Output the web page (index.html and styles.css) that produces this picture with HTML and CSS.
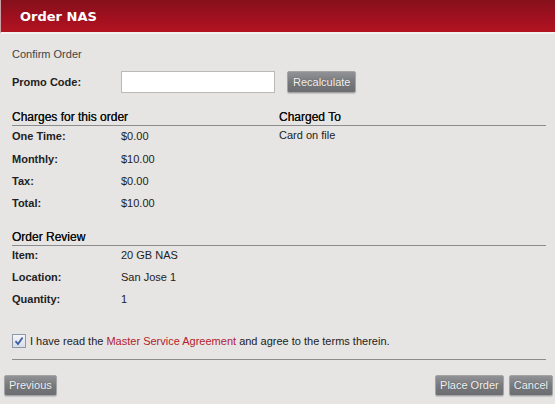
FILE: index.html
```html
<!doctype html>
<html lang="en">
  <head>
    <meta charset="UTF-8" />
    <meta name="viewport" content="width=device-width, initial-scale=1.0" />
    <title>Order NAS</title>
    <link rel="stylesheet" href="styles.css">
  </head>

  <body>
    <div class="dialog">
      <header class="dialog-title">Order NAS</header>

      <main class="dialog-body">
        <p class="subtitle">Confirm Order</p>

        <div class="promo">
          <label for="promo" class="label">Promo Code:</label>
          <input type="text" id="promo" />
          <button type="button" class="btn">Recalculate</button>
        </div>

        <div class="cols">
          <section>
            <h4 class="section-head">Charges for this order</h4>
            <div class="row"><span class="label">One Time:</span><span>$0.00</span></div>
            <div class="row"><span class="label">Monthly:</span><span>$10.00</span></div>
            <div class="row"><span class="label">Tax:</span><span>$0.00</span></div>
            <div class="row"><span class="label">Total:</span><span>$10.00</span></div>
          </section>
          <section>
            <h4 class="section-head">Charged To</h4>
            <div class="note">Card on file</div>
          </section>
        </div>

        <section class="review">
          <h4 class="section-head">Order Review</h4>
          <div class="row"><span class="label">Item:</span><span>20 GB NAS</span></div>
          <div class="row"><span class="label">Location:</span><span>San Jose 1</span></div>
          <div class="row"><span class="label">Quantity:</span><span>1</span></div>
        </section>

        <div class="agree">
          <span class="check">
            <svg width="10" height="10" viewBox="0 0 10 10">
              <path d="M1.5 5.2 L4 8 L8.6 1.4" fill="none" stroke="#3d5fa6" stroke-width="1.8" />
            </svg>
          </span>
          <span>I have read the <a href="#">Master Service Agreement</a> and agree to the terms therein.</span>
        </div>

        <hr class="divider" />
      </main>

      <footer class="dialog-foot">
        <button type="button" class="btn">Previous</button>
        <div class="foot-right">
          <button type="button" class="btn">Place Order</button>
          <button type="button" class="btn">Cancel</button>
        </div>
      </footer>
    </div>
  </body>
</html>
```

FILE: styles.css
```css
html,
body {
  margin: 0;
  height: 100%;
}

body {
  background: #e6e5e3;
  font-family: "Liberation Sans", Arial, sans-serif;
  font-size: 11px;
  color: #222;
}

.dialog-title {
  height: 32px;
  line-height: 33px;
  padding-left: 19px;
  background: linear-gradient(to bottom, #85101b, #a3101f 60%, #b2141f);
  border-left: 1px solid #c9a0a3;
  border-bottom: 2px solid #f3f2f0;
  color: #fff;
  font-family: "DejaVu Sans", Verdana, sans-serif;
  font-weight: bold;
  font-size: 13px;
}

.dialog-body {
  padding: 13px 9px 0 12px;
}

.subtitle {
  margin: 0;
  line-height: 14px;
  color: #444;
}

.label {
  font-weight: bold;
  width: 109px;
  flex: none;
}

.promo {
  display: flex;
  align-items: center;
  margin-top: 10px;
  height: 22px;

  & input {
    width: 154px;
    height: 22px;
    box-sizing: border-box;
    border: 1px solid #b9b9b9;
    background: #fff;
    margin: 0 12px 0 0;
    padding: 0 3px;
  }
}

.btn {
  height: 22px;
  padding: 0 5px;
  border: 1px solid #a3a4a6;
  border-radius: 2px;
  background: linear-gradient(to bottom, #909296, #76787c 55%, #6b6d71);
  color: #f2f2f2;
  font-family: "Liberation Sans", Arial, sans-serif;
  font-size: 11px;
  text-shadow: 0 0 1px #555;
  box-shadow: 0 1px 1px rgba(0, 0, 0, 0.15);
}

.cols {
  display: grid;
  grid-template-columns: 267px 1fr;
  margin-top: 16px;
}

.section-head {
  margin: 0;
  height: 16px;
  line-height: 17px;
  font-size: 12px;
  font-weight: normal;
  color: #111;
  border-bottom: 1px solid #8c8c8c;
  text-shadow: 0 0 0.3px #111;
}

.row {
  display: flex;
  align-items: center;
  height: 22.4px;
}

.section-head + .row {
  margin-top: -1px;
}

.note {
  line-height: 18px;
}

.review {
  margin-top: 14px;

  & .row {
    height: 22px;
  }

  & .section-head + .row {
    margin-top: -2px;
  }
}

.agree {
  display: flex;
  align-items: center;
  gap: 4px;
  margin-top: 23px;
  height: 16px;

  & a {
    color: #b3212d;
    text-decoration: none;
  }
}

.check {
  width: 12px;
  height: 12px;
  border: 1px solid #8e99a8;
  background: linear-gradient(to bottom, #f4f5f8, #d9dde6);
  display: flex;
  align-items: center;
  justify-content: center;
}

.divider {
  border: 0;
  border-top: 1px solid #8c8c8c;
  margin: 10px 0 0;
}

.dialog-foot {
  display: flex;
  justify-content: space-between;
  padding: 15px 2px 0 4px;

  & .btn {
    height: 21px;
    padding: 0 4px;
  }
}

.foot-right {
  display: flex;
  gap: 5px;
}
```
